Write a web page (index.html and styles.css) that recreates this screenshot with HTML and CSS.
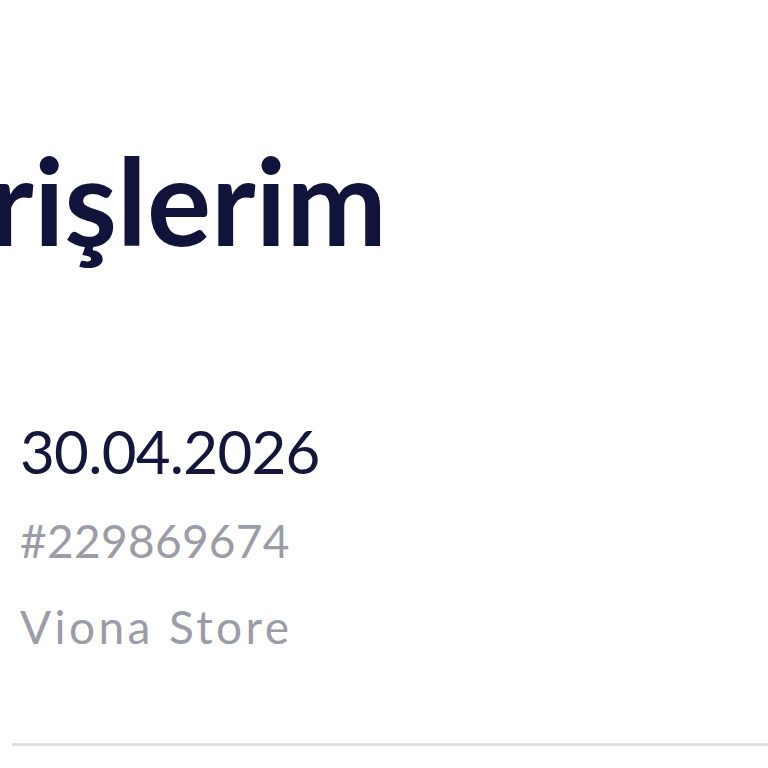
FILE: index.html
```html
<!DOCTYPE html>
<html lang="tr">
<head>
<meta charset="utf-8">
<link rel="stylesheet" href="styles.css">
</head>
<body>
<main class="page">
  <h1 class="title">Siparişlerim</h1>
  <section class="order">
    <div class="order-date">30.04.2026</div>
    <div class="order-id">#229869674</div>
    <div class="order-store">Viona Store</div>
  </section>
  <hr class="divider">
</main>
</body>
</html>
```
FILE: styles.css
```css
html, body {
  margin: 0;
  padding: 0;
  background: #ffffff;
  overflow: hidden;
}
.page {
  width: 768px;
  height: 768px;
  overflow: hidden;
  font-family: "Lato", "Inter", sans-serif;
  padding-left: 20px;
  box-sizing: border-box;
}
.title {
  margin: 0;
  padding-top: 130px;
  margin-left: -256px;
  font-size: 120px;
  line-height: 140px;
  font-weight: 700;
  color: #12133a;
  white-space: nowrap;
}
.order {
  padding-top: 141px;
  display: flex;
  flex-direction: column;
}
.order-date {
  font-size: 60px;
  line-height: 80px;
  color: #14163a;
  letter-spacing: -0.7px;
}
.order-id, .order-store {
  font-size: 46px;
  line-height: 85px;
  color: #9b9ca6;
}
.order-id {
  margin-top: 7px;
  letter-spacing: 0.3px;
}
.order-store {
  margin-top: 1px;
  letter-spacing: 3.4px;
}
.divider {
  border: none;
  height: 3px;
  background: #e0e0e2;
  margin: 74px 0 0 -8px;
}
```
